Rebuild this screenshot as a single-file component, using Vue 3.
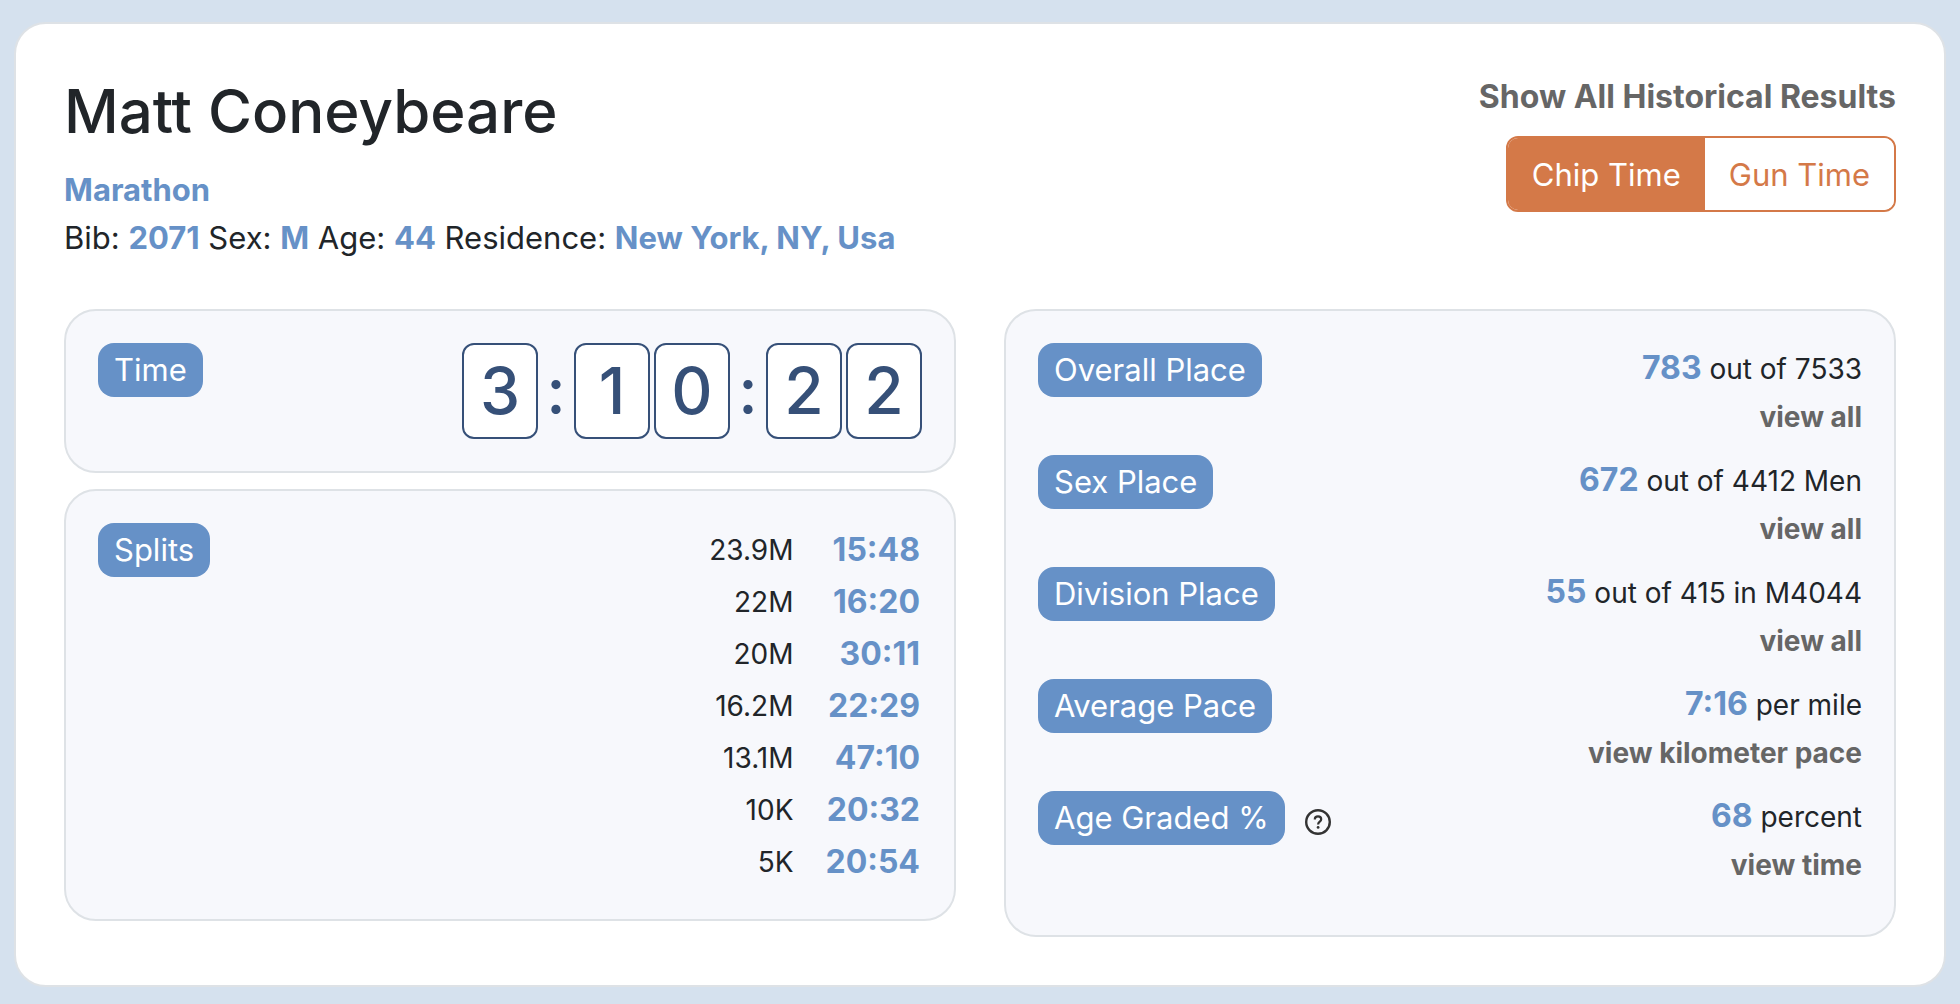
<script setup>
import { ref } from 'vue'

const timing = ref('chip')

const splits = [
  { point: '23.9M', time: '15:48' },
  { point: '22M', time: '16:20' },
  { point: '20M', time: '30:11' },
  { point: '16.2M', time: '22:29' },
  { point: '13.1M', time: '47:10' },
  { point: '10K', time: '20:32' },
  { point: '5K', time: '20:54' },
]

const clock = ['3', ':', '1', '0', ':', '2', '2']

const stats = [
  { label: 'Overall Place', value: '783', rest: 'out of 7533', link: 'view all' },
  { label: 'Sex Place', value: '672', rest: 'out of 4412 Men', link: 'view all' },
  { label: 'Division Place', value: '55', rest: 'out of 415 in M4044', link: 'view all' },
  { label: 'Average Pace', value: '7:16', rest: 'per mile', link: 'view kilometer pace' },
  { label: 'Age Graded %', value: '68', rest: 'percent', link: 'view time', help: true },
]
</script>

<template>
  <main class="card">
    <header class="header">
      <div>
        <h1 class="name">Matt Coneybeare</h1>
        <div><a href="#" class="accent">Marathon</a></div>
        <div>
          Bib: <b class="accent">2071</b> Sex: <b class="accent">M</b> Age:
          <b class="accent">44</b> Residence: <b class="accent">New York, NY, Usa</b>
        </div>
      </div>
      <div class="actions">
        <a href="#" class="link history">Show All Historical Results</a>
        <div class="toggle">
          <button type="button" :class="{ active: timing === 'chip' }" @click="timing = 'chip'">Chip Time</button>
          <button type="button" :class="{ active: timing === 'gun' }" @click="timing = 'gun'">Gun Time</button>
        </div>
      </div>
    </header>

    <div class="columns">
      <div class="column">
        <section class="panel row">
          <span class="badge">Time</span>
          <div class="clock">
            <span v-for="(c, i) in clock" :key="i" :class="c === ':' ? 'colon' : 'digit'">{{ c }}</span>
          </div>
        </section>
        <section class="panel row">
          <span class="badge">Splits</span>
          <table class="splits">
            <tbody>
              <tr v-for="s in splits" :key="s.point">
                <th scope="row">{{ s.point }}</th>
                <td class="accent">{{ s.time }}</td>
              </tr>
            </tbody>
          </table>
        </section>
      </div>

      <section class="panel">
        <div v-for="s in stats" :key="s.label" class="row">
          <div class="label">
            <span class="badge">{{ s.label }}</span>
            <svg v-if="s.help" class="help" viewBox="0 0 26 26" role="img" aria-label="Help">
              <circle cx="13" cy="13" r="11.8" fill="none" stroke="currentColor" stroke-width="2.4" />
              <path d="M9.8 10.4C9.8 8.5 11.1 7.4 13 7.4s3.2 1.1 3.2 2.8c0 2.5-3.1 2.3-3.1 5.2" fill="none" stroke="currentColor" stroke-width="2.2" />
              <circle cx="13.1" cy="18.4" r="1.4" fill="currentColor" />
            </svg>
          </div>
          <div class="figures">
            <div><b class="accent value">{{ s.value }}</b> {{ s.rest }}</div>
            <div><a href="#" class="link">{{ s.link }}</a></div>
          </div>
        </div>
      </section>
    </div>
  </main>
</template>

<style>
body {
  margin: 0;
  background: #d5e1ee;
}
</style>

<style scoped>
.card {
  box-sizing: border-box;
  margin: 22px 14px 17px;
  padding: 48px;
  border: 2px solid #dee2e6;
  border-radius: 32px;
  background: #fff;
  color: #212529;
  font-family: Inter, "Liberation Sans", sans-serif;
  font-size: 31px;
  line-height: 48px;
}

a {
  text-decoration: none;
}

.accent {
  color: #6691c7;
  font-weight: 700;
}

.link {
  color: #666;
  font-weight: 700;
}

.header {
  display: flex;
  justify-content: space-between;
  align-items: flex-start;
  margin-bottom: 47px;
}

.name {
  margin: 0 0 16px;
  font-size: 60px;
  font-weight: 500;
  line-height: 78px;
}

.actions {
  display: flex;
  flex-direction: column;
  align-items: flex-end;
  gap: 15px;
}

.history {
  padding-top: 1px;
  font-size: 32px;
}

.toggle {
  display: flex;
  overflow: hidden;
  border: 2px solid #d47948;
  border-radius: 12px;
}

.toggle button {
  padding: 13px 24px 11px;
  border: 0;
  background: #fff;
  color: #d47948;
  font: inherit;
}

.toggle .active {
  background: #d47948;
  color: #fff;
}

.columns {
  display: grid;
  grid-template-columns: 1fr 1fr;
  align-items: start;
  gap: 48px;
}

.column {
  display: grid;
  gap: 16px;
}

.panel {
  padding: 32px;
  border: 2px solid #dee2e6;
  border-radius: 32px;
  background: #f7f8fc;
}

.row {
  display: flex;
  justify-content: space-between;
  align-items: flex-start;
}

.badge {
  padding: 3px 16px;
  border-radius: 16px;
  background: #6691c7;
  color: #fff;
}

.clock {
  display: flex;
  gap: 4px;
  color: #365078;
  font-size: 64px;
  font-weight: 500;
  line-height: 92px;
  text-align: center;
}

.digit {
  width: 72px;
  border: 2px solid #365078;
  border-radius: 12px;
  background: #fff;
}

.colon {
  width: 28px;
  line-height: 96px;
}

.splits {
  border-collapse: collapse;
  text-align: right;
}

.splits th {
  padding: 3px 32px 1px 0;
  font-size: 28px;
  font-weight: 400;
}

.splits td {
  padding: 3px 2px 1px 0;
  font-size: 32px;
}

.figures {
  padding: 2px 0 14px;
  font-size: 28px;
  text-align: right;
}

.value {
  font-size: 32px;
  line-height: 32px;
}

.label {
  display: flex;
  align-items: center;
  gap: 20px;
}

.help {
  width: 26px;
  height: 26px;
  margin-top: 8px;
  color: #333;
}
</style>
